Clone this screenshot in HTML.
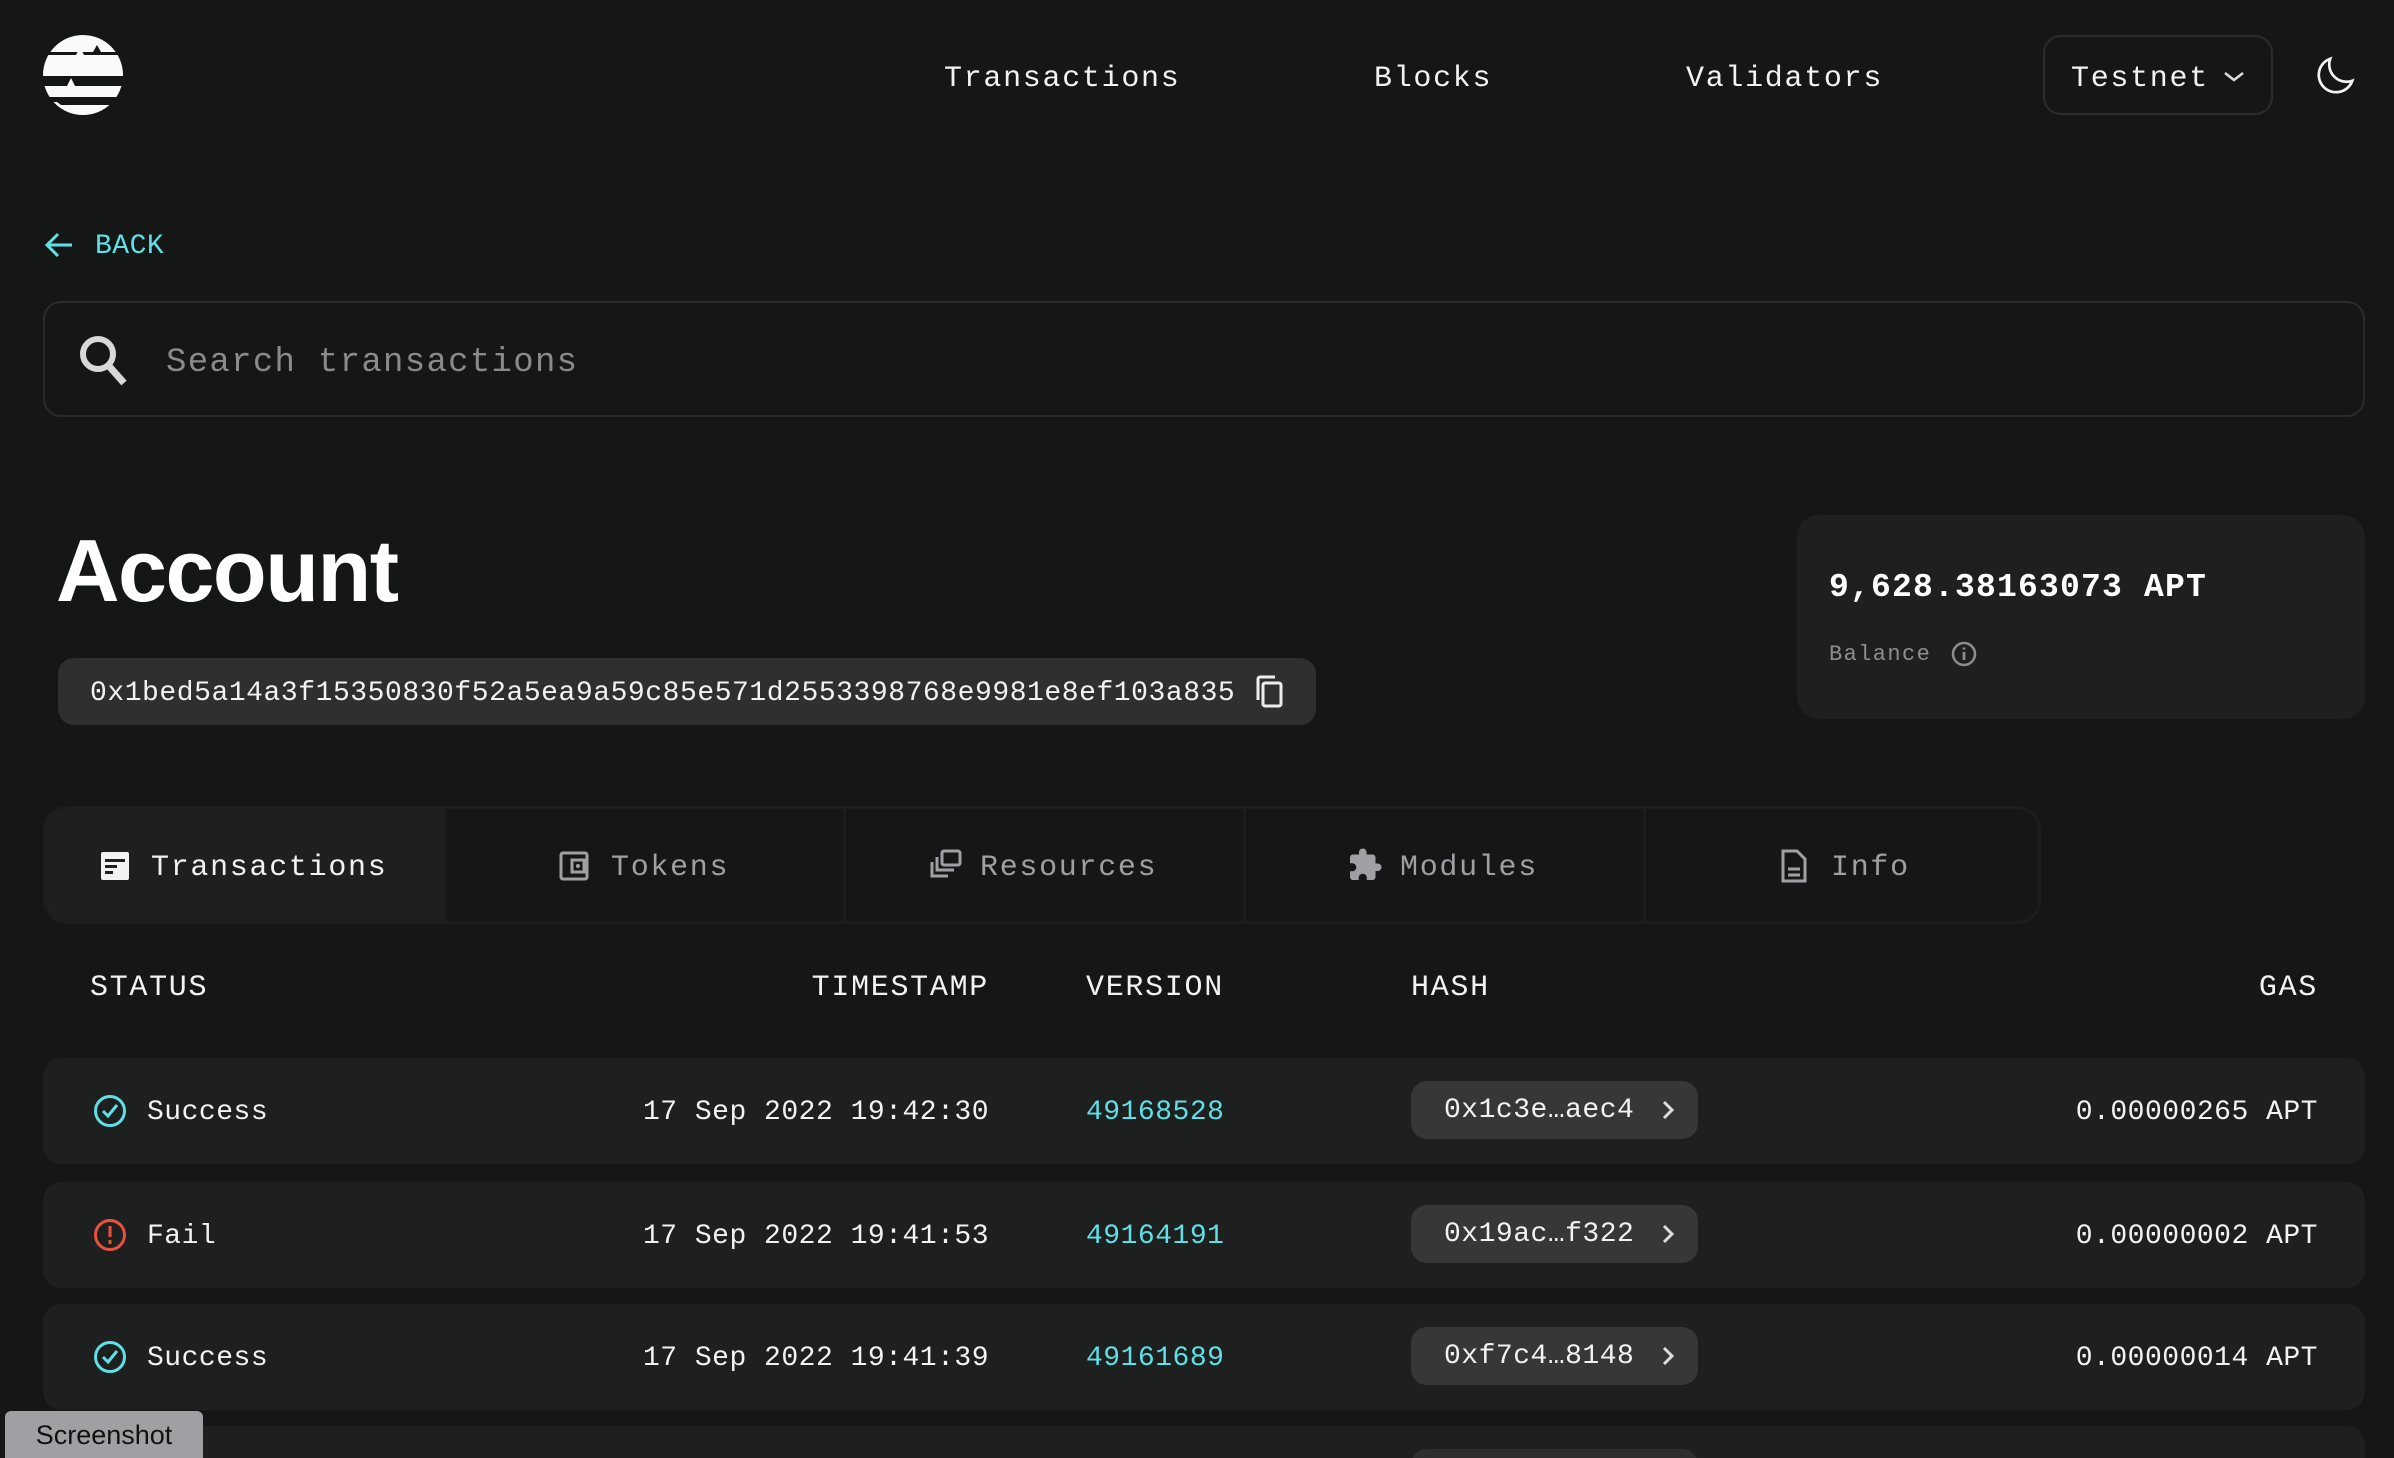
<!DOCTYPE html>
<html style="width:2394px;height:1458px;overflow:hidden"><head><meta charset="utf-8"><style>
*{margin:0;padding:0;box-sizing:border-box}
body{width:2394px;height:1458px;background:#151717;overflow:hidden;position:relative;font-family:"Liberation Mono",monospace;color:#f2f2f2}
.a{position:absolute;white-space:nowrap}
.nav{font-size:30px;letter-spacing:1.7px;line-height:40px;top:59px}
.row{position:absolute;left:43px;width:2322px;height:106px;background:#1e2020;border-radius:18px}
.t{position:absolute;font-size:28px;letter-spacing:0.5px;line-height:40px;top:35px;white-space:nowrap}
.hp{position:absolute;left:1368px;top:23px;width:287px;height:58px;background:#363838;border-radius:16px}
.tl{position:absolute;font-size:30px;letter-spacing:1.7px;line-height:40px;top:39px;color:#a0a0a4;white-space:nowrap}
.h{position:absolute;top:968px;font-size:30px;letter-spacing:1.7px;line-height:40px}
</style></head><body>
<svg class="a" style="left:43px;top:35px" width="80" height="80" viewBox="0 0 80 80">
<defs><clipPath id="c"><ellipse cx="40" cy="40" rx="40" ry="40"/></clipPath></defs>
<g clip-path="url(#c)" fill="#fafafa">
<path d="M0 0H80V17H58L54 10L50 17H0Z"/>
<path d="M0 20H33L37 12L41 20H80V41H0Z"/>
<path d="M0 51H24L28 43L32 51H80V62H0Z"/>
<path d="M0 67H14L18 70H80V80H0Z"/>
</g></svg>
<div class="a nav" style="left:944px">Transactions</div>
<div class="a nav" style="left:1374px">Blocks</div>
<div class="a nav" style="left:1686px">Validators</div>
<div class="a" style="left:2043px;top:35px;width:230px;height:80px;border:2px solid #2b2d2d;border-radius:18px"></div>
<div class="a nav" style="left:2071px">Testnet</div>
<svg class="a" style="left:2222px;top:70px" width="24" height="14" viewBox="0 0 24 14"><path d="M3 3L12 10L21 3" stroke="#ddd" stroke-width="2.5" fill="none"/></svg>
<svg class="a" style="left:2313px;top:52px" width="46" height="46" viewBox="0 0 24 24"><path d="M20.5 15A9 9 0 0 1 9 3.5 9 9 0 1 0 20.5 15Z" stroke="#f2f2f2" stroke-width="1.4" fill="none"/></svg>

<svg class="a" style="left:44px;top:231px" width="30" height="28" viewBox="0 0 30 28"><path d="M14 3L3 14L14 25M3 14H28" stroke="#5ee0e6" stroke-width="3" fill="none"/></svg>
<div class="a" style="left:95px;top:229px;font-size:28px;letter-spacing:0.5px;color:#5ee0e6;line-height:36px">BACK</div>

<div class="a" style="left:43px;top:301px;width:2322px;height:116px;border:2px solid #2a2c2c;border-radius:18px"></div>
<svg class="a" style="left:74px;top:331px" width="56" height="56" viewBox="0 0 56 56"><circle cx="24" cy="23" r="15" stroke="#d8d8d8" stroke-width="6" fill="none"/><path d="M34 34L50 52" stroke="#d8d8d8" stroke-width="7"/></svg>
<div class="a" style="left:166px;top:341px;font-size:34px;letter-spacing:1.3px;line-height:44px;color:#8a8a8d">Search transactions</div>

<div class="a" style="left:56px;top:516px;font-family:'Liberation Sans',sans-serif;font-weight:bold;font-size:88px;line-height:110px;letter-spacing:-1.5px;color:#fff">Account</div>
<div class="a" style="left:58px;top:658px;width:1258px;height:67px;background:#2e3030;border-radius:16px"></div>
<div class="a" style="left:90px;top:674px;font-size:28px;letter-spacing:0.55px;line-height:40px">0x1bed5a14a3f15350830f52a5ea9a59c85e571d2553398768e9981e8ef103a835</div>
<svg class="a" style="left:1254px;top:674px" width="32" height="36" viewBox="0 0 32 36"><rect x="9" y="9" width="18" height="23" rx="2" stroke="#eee" stroke-width="3" fill="none"/><path d="M4 26V5a2 2 0 0 1 2-2H21" stroke="#eee" stroke-width="3" fill="none"/></svg>

<div class="a" style="left:1797px;top:515px;width:568px;height:204px;background:#1e2020;border-radius:22px"></div>
<div class="a" style="left:1829px;top:566px;font-size:33px;font-weight:bold;letter-spacing:1.2px;line-height:44px;color:#fff">9,628.38163073 APT</div>
<div class="a" style="left:1829px;top:640px;font-size:22px;letter-spacing:1.4px;line-height:30px;color:#8d8d92">Balance</div>
<svg class="a" style="left:1950px;top:640px" width="28" height="28" viewBox="0 0 28 28"><circle cx="14" cy="14" r="11" stroke="#8d8d92" stroke-width="2.5" fill="none"/><path d="M14 12V20M14 7.5V9.5" stroke="#8d8d92" stroke-width="2.8"/></svg>

<div class="a" style="left:43px;top:806px;width:1998px;height:118px;border:3px solid #1c1e1e;border-radius:24px;background:#151717;overflow:hidden">
<div style="position:absolute;left:0;top:0;width:398px;height:118px;background:#1e2020"></div>
<div style="position:absolute;left:397px;top:0;width:3px;height:118px;background:#1c1e1e"></div>
<div style="position:absolute;left:797px;top:0;width:3px;height:118px;background:#1c1e1e"></div>
<div style="position:absolute;left:1197px;top:0;width:3px;height:118px;background:#1c1e1e"></div>
<div style="position:absolute;left:1597px;top:0;width:3px;height:118px;background:#1c1e1e"></div>
</div>
<svg class="a" style="left:99px;top:850px" width="32" height="32" viewBox="0 0 32 32"><rect x="2" y="2" width="28" height="28" rx="2" fill="#f2f2f2"/><rect x="6" y="9" width="20" height="3" fill="#1e2020"/><rect x="6" y="15" width="12" height="3" fill="#1e2020"/><rect x="6" y="21" width="8" height="3" fill="#1e2020"/></svg>
<div class="a tl" style="left:151px;top:848px;color:#f2f2f2">Transactions</div>
<svg class="a" style="left:558px;top:850px" width="32" height="32" viewBox="0 0 32 32"><rect x="3" y="3" width="26" height="26" rx="2" stroke="#a0a0a4" stroke-width="3" fill="none"/><rect x="14" y="10" width="12" height="12" stroke="#a0a0a4" stroke-width="3" fill="none"/><circle cx="20" cy="16" r="2" fill="#a0a0a4"/></svg>
<div class="a tl" style="left:611px;top:848px">Tokens</div>
<svg class="a" style="left:928px;top:848px" width="36" height="34" viewBox="0 0 36 34"><rect x="14" y="3" width="18" height="14" rx="2" stroke="#a0a0a4" stroke-width="3" fill="none"/><path d="M9 9V22H26M4 14V28H20" stroke="#a0a0a4" stroke-width="3" fill="none"/></svg>
<div class="a tl" style="left:980px;top:848px">Resources</div>
<svg class="a" style="left:1346px;top:847px" width="38" height="36" viewBox="0 0 24 24"><path d="M20.5 11H19V7c0-1.1-.9-2-2-2h-4V3.5C13 2.12 11.88 1 10.5 1S8 2.12 8 3.5V5H4c-1.1 0-2 .9-2 2v3.8h1.5c1.49 0 2.7 1.21 2.7 2.7s-1.21 2.7-2.7 2.7H2V20c0 1.1.9 2 2 2h3.8v-1.5c0-1.490 1.21-2.7 2.7-2.7s2.7 1.21 2.7 2.7V22H17c1.1 0 2-.9 2-2v-4h1.5c1.38 0 2.5-1.12 2.5-2.5S21.88 11 20.5 11z" fill="#a0a0a4"/></svg>
<div class="a tl" style="left:1400px;top:848px">Modules</div>
<svg class="a" style="left:1780px;top:848px" width="28" height="36" viewBox="0 0 28 36"><path d="M3 3H17L25 11V33H3Z" stroke="#a0a0a4" stroke-width="3" fill="none"/><path d="M8 21H20M8 27H20" stroke="#a0a0a4" stroke-width="3"/></svg>
<div class="a tl" style="left:1831px;top:848px">Info</div>

<div class="h" style="left:90px">STATUS</div>
<div class="h" style="right:1405px">TIMESTAMP</div>
<div class="h" style="left:1086px">VERSION</div>
<div class="h" style="left:1411px">HASH</div>
<div class="h" style="right:76px">GAS</div>

<div class="row" style="top:1058px">
<svg style="position:absolute;left:50px;top:36px" width="34" height="34" viewBox="0 0 34 34"><circle cx="17" cy="17" r="14.5" stroke="#5ee0e6" stroke-width="3" fill="none"/><path d="M10 17L15 22L24 11" stroke="#5ee0e6" stroke-width="3" fill="none"/></svg>
<div class="t" style="left:104px">Success</div>
<div class="t" style="right:1376px">17 Sep 2022 19:42:30</div>
<div class="t" style="left:1043px;color:#5ee0e6">49168528</div>
<div class="hp"><div class="t" style="left:33px;top:10px">0x1c3e…aec4</div><svg style="position:absolute;left:250px;top:18px" width="14" height="22" viewBox="0 0 14 22"><path d="M3 3L11 11L3 19" stroke="#ddd" stroke-width="3" fill="none"/></svg></div>
<div class="t" style="right:47px">0.00000265 APT</div>
</div>
<div class="row" style="top:1182px">
<svg style="position:absolute;left:50px;top:36px" width="34" height="34" viewBox="0 0 34 34"><circle cx="17" cy="17" r="14.5" stroke="#e5533f" stroke-width="3" fill="none"/><path d="M17 8V19M17 22V26" stroke="#e5533f" stroke-width="3"/></svg>
<div class="t" style="left:104px">Fail</div>
<div class="t" style="right:1376px">17 Sep 2022 19:41:53</div>
<div class="t" style="left:1043px;color:#5ee0e6">49164191</div>
<div class="hp"><div class="t" style="left:33px;top:10px">0x19ac…f322</div><svg style="position:absolute;left:250px;top:18px" width="14" height="22" viewBox="0 0 14 22"><path d="M3 3L11 11L3 19" stroke="#ddd" stroke-width="3" fill="none"/></svg></div>
<div class="t" style="right:47px">0.00000002 APT</div>
</div>
<div class="row" style="top:1304px">
<svg style="position:absolute;left:50px;top:36px" width="34" height="34" viewBox="0 0 34 34"><circle cx="17" cy="17" r="14.5" stroke="#5ee0e6" stroke-width="3" fill="none"/><path d="M10 17L15 22L24 11" stroke="#5ee0e6" stroke-width="3" fill="none"/></svg>
<div class="t" style="left:104px">Success</div>
<div class="t" style="right:1376px">17 Sep 2022 19:41:39</div>
<div class="t" style="left:1043px;color:#5ee0e6">49161689</div>
<div class="hp"><div class="t" style="left:33px;top:10px">0xf7c4…8148</div><svg style="position:absolute;left:250px;top:18px" width="14" height="22" viewBox="0 0 14 22"><path d="M3 3L11 11L3 19" stroke="#ddd" stroke-width="3" fill="none"/></svg></div>
<div class="t" style="right:47px">0.00000014 APT</div>
</div>
<div class="row" style="top:1426px;height:32px;border-radius:18px 18px 0 0;overflow:hidden"><div class="hp" style="background:#2e3030"></div></div>

<div class="a" style="left:5px;top:1411px;width:198px;height:47px;background:#9fa0a3;border-radius:6px 6px 0 0;font-family:'Liberation Sans',sans-serif;font-size:27px;color:#111;line-height:48px;text-align:center">Screenshot</div>
</body></html>
